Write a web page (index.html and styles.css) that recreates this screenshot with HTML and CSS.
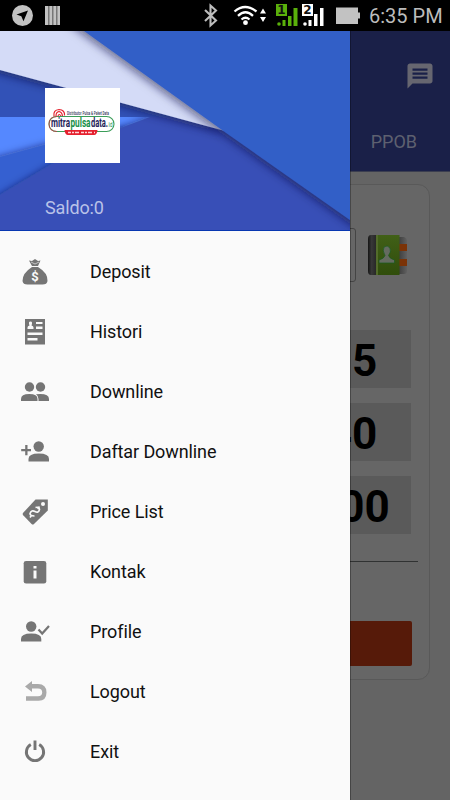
FILE: index.html
```html
<!DOCTYPE html>
<html lang="id">
<head>
<meta charset="utf-8">
<title>Mitra Pulsa Data</title>
<link rel="stylesheet" href="styles.css">
</head>
<body>
<div class="status">
  <svg class="status-left" width="80" height="31" viewBox="0 0 80 31">
    <circle cx="22.500" cy="15.500" r="10.500" fill="#c2c2c2"/>
    <path d="M28 10.500 16.500 14.500l4.800 1.800 2.200 5z" fill="#000"/>
    <path d="M45 6h15v19H45z" fill="#777"/>
    <path d="M45 6h3v19h-3zM49.500 6h2.500v19h-2.500zM53.500 6h2.500v19h-2.500zM57.500 6h2.500v19h-2.500z" fill="#c2c2c2"/>
  </svg>
  <svg class="status-right" width="165" height="31" viewBox="0 0 165 31">
    <path d="m5 10 11 10.500-5.500 5V5.500l5.500 5L5 21" fill="none" stroke="#bdbdbd" stroke-width="2.100"/>
    <g fill="none" stroke="#fff" stroke-width="2.300">
      <path d="M34.500 11.500q10.500-9 22 0M38 15.800q7.500-7 15 0M41.500 19.500q4-3.500 8 0"/>
    </g>
    <circle cx="45.500" cy="22.700" r="2.400" fill="#fff"/>
    <path d="m60 13.500 3-5 3 5zM60 17l3 5 3-5z" fill="#fff"/>
    <g fill="#5ab00b"><path d="M76 4h11v12H76z"/><circle cx="79" cy="24" r="1.800"/><path d="M82.500 20h3v6h-3zM88 16h3.500v10H88zM93.500 8H97.500v18h-4z"/></g>
    <g fill="#fff"><path d="M102 4h11v12h-11z"/><circle cx="105" cy="24" r="1.800"/><path d="M108.500 20h3v6h-3zM114 14h3.500v12H114zM120 8h3.500v18H120z"/></g>
    <text class="sim" x="81.500" y="14">1</text><text class="sim" x="107.500" y="14">2</text>
    <path d="M136 7.500h22v5h2v6h-2V24h-22z" fill="#c2c2c2"/>
  </svg>
  <span class="clock">6:35 PM</span>
</div>
<div class="screen">
  <main class="page">
    <header class="appbar">
      <svg class="chat" width="30" height="30" viewBox="0 0 24 24"><path fill="#666670" d="M20 2H4c-1.100 0-2 .9-2 2v18l4-4h14c1.100 0 2-.9 2-2V4c0-1.100-.9-2-2-2zM6 6h12v1.800H6zm0 3.200h12V11H6zm0 3.200h12v1.800H6z"/></svg>
      <span class="tab">PPOB</span>
    </header>
    <section class="card">
      <div class="entry">
        <div class="input"></div>
        <svg width="42" height="42" viewBox="0 0 42 42">
          <defs>
            <linearGradient id="spine"><stop offset="0" stop-color="#151515"/><stop offset=".4" stop-color="#383838"/><stop offset="1" stop-color="#242424"/></linearGradient>
            <linearGradient id="cover" x2="0" y2="1"><stop offset="0" stop-color="#416017"/><stop offset="1" stop-color="#304d0b"/></linearGradient>
            <linearGradient id="pages"><stop offset="0" stop-color="#3f3f3f"/><stop offset="1" stop-color="#606060"/></linearGradient>
          </defs>
          <path d="M32 3h5q3 1 3 4v30q0 3-3 3h-5z" fill="url(#pages)"/>
          <path d="M32 10h8v7h-8zM32 25h8v7h-8z" fill="#7b3307"/>
          <path d="M4 1h6v40H4q-3 0-3-4V5q0-4 3-4z" fill="url(#spine)"/>
          <path d="M9 1h23.500v40H9z" fill="url(#cover)"/>
          <path d="M9 1h2v40H9z" fill="#536c2b"/>
          <path d="M17 13q3.500-2.500 6 1 1.500 4-1.500 7.500 1 3 6 4.500v3H12v-3q5-1.500 6-4.500-3-5-1-8.500z" fill="#656b60" stroke="#195b20" stroke-width=".7"/>
        </svg>
      </div>
      <div class="amounts">
        <div class="amount">15</div>
        <div class="amount">40</div>
        <div class="amount">100</div>
      </div>
      <div class="rule"></div>
      <div class="buy"></div>
    </section>
  </main>
  <aside class="drawer">
    <div class="hero">
      <svg class="art" width="350" height="200" viewBox="0 0 350 200">
        <defs>
          <filter id="sh" x="-20%" y="-20%" width="140%" height="150%"><feDropShadow dx="-1" dy="3" stdDeviation="5" flood-color="#0a1240" flood-opacity=".6"/></filter>
          <filter id="up" x="-20%" y="-20%" width="140%" height="140%"><feDropShadow dx="0" dy="-1" stdDeviation="3.500" flood-color="#0a1750" flood-opacity=".5"/></filter>
        </defs>
        <path d="M0 0h350v200H0z" fill="#3252b7"/>
        <path d="M0 86h160v60H0z" fill="#5588ff"/>
        <path d="M-20 131.500 0 126 44 114 100 101 120 98 150 104H190v111H-20z" fill="#3660d1" filter="url(#up)"/>
        <path d="M-20 175 0 164 54 132Q100 103 150 86L240 70l140 140v20H-20z" fill="#3850b7" filter="url(#up)"/>
        <path d="M0 0h350v86H0z" fill="#3252b7"/>
        <path d="M-20-20H80L225 100 0 39-20 33z" fill="#d4dbf7" filter="url(#sh)"/>
        <path d="M57-20H380V210L350 189 222 99 84 0z" fill="#335ec7" filter="url(#sh)"/>
        <path d="M0 199h350v1H0z" fill="#0837b1"/>
      </svg>
      <svg class="logo" width="75" height="75" viewBox="0 0 75 75">
        <path d="M0 0h75v75H0z" fill="#fff"/>
        <g fill="none" stroke="#e32632" stroke-width="1.200"><path d="M9 28q-1-6 5-6.500 6 .5 5.500 6M11 28q0-4 3-4.500 3 .5 3.500 4.500M13 28q1-3 3 0"/></g>
        <rect x="4" y="28.500" width="65" height="15" rx="7.500" fill="#fff" stroke="#3b9d59" stroke-width="1.100"/>
        <path d="M12 28.500Q4 28.500 4 36t8 7.500" fill="none" stroke="#c53543" stroke-width=".8"/>
        <text class="tiny" x="22" y="26.500" textLength="42" lengthAdjust="spacingAndGlyphs">Distributor Pulsa &amp; Paket Data</text>
        <text class="brand" x="6" y="38.800" textLength="19" lengthAdjust="spacingAndGlyphs">mitra</text>
        <text class="brand green" x="25.500" y="38.800" textLength="20" lengthAdjust="spacingAndGlyphs">pulsa</text>
        <text class="brand" x="46" y="38.800" textLength="17" lengthAdjust="spacingAndGlyphs">data.</text>
        <text class="tld" x="63.500" y="38.800" textLength="4" lengthAdjust="spacingAndGlyphs">id</text>
        <path d="M19.500 42h33q-.5 5-3.500 5H23q-3 0-3.500-5z" fill="#e5202e"/>
        <path d="M23 44.500h27" stroke="#ffd4d7" stroke-width="1.300" stroke-dasharray="3 1 2 1 4 2"/>
      </svg>
      <div class="saldo">Saldo:0</div>
    </div>
    <nav class="menu">
      <a class="item"><svg viewBox="0 0 30 30"><path d="M9 3.500 12 4l3-2 3 2 2.500-.5L18 9h-6zM12 10h6q10 6 9.500 14-.5 3.500-5 3.500h-15q-4.500 0-5-3.500Q2.500 16 12 10z"/><path d="m11 5 4 2 4-2" fill="none" stroke="#fafafa" stroke-width=".6"/><text class="dollar" x="15" y="23.500">$</text></svg><span>Deposit</span></a>
      <a class="item"><svg viewBox="0 0 30 30"><path d="M5 2h20v25.500H5z"/><path fill="#fafafa" d="M7.500 12v-1.500q0-1.500 2-2Q8 4.500 10.500 4.500T11.500 8.500q2 .5 2 2V12zM16 5h6.500v2H16zM16 9.500h6.500v2.500H16zM7.500 15.500h15v2.500h-15zM7.500 21h10v2.500h-10z"/></svg><span>Histori</span></a>
      <a class="item"><svg viewBox="0 0 30 30"><circle cx="9.500" cy="10" r="4.700"/><circle cx="20.500" cy="10" r="4.700"/><path d="M1 24v-2q0-5 8.300-5t8.200 5v2zM18.500 24v-2q0-3-2.500-4.700 13-1.300 13 4.700v2z"/></svg><span>Downline</span></a>
      <a class="item"><svg viewBox="0 0 30 30"><circle cx="18.700" cy="9.500" r="5.200"/><path d="M8.500 24.500V22q0-5.500 10.300-5.500T29 22v2.500zM5.200 8h2.300v4H11v2.200H7.500v4H5.200v-4h-4V12h4z"/></svg><span>Daftar Downline</span></a>
      <a class="item"><svg viewBox="0 0 30 30"><path d="M15.500 2.500H27.800v11L14 27q-1.200 1-2.400 0l-8.400-8.700q-1-1.300 0-2.500z"/><circle cx="23" cy="7" r="2" fill="#fafafa"/><path d="M15.500 10.500q4-1 4 2-1 4-4.500 2t-5 2q0 2.500 4.500 2.500M10 20.500l1.500-2M17.500 12l2-2.500" fill="none" stroke="#fafafa" stroke-width="1.600"/></svg><span>Price List</span></a>
      <a class="item"><svg viewBox="0 0 30 30"><rect x="3.700" y="4" width="22.600" height="22.500" rx="2.300"/><path fill="#fafafa" d="M13.500 9h3v2.500h-3zM13.500 13.500h3v8h-3z"/></svg><span>Kontak</span></a>
      <a class="item"><svg viewBox="0 0 30 30"><circle cx="11.200" cy="9.500" r="5.200"/><path d="M1 24.500V22q0-5.500 10.200-5.500T21.300 22v2.500z"/><path d="m18.500 12.500 3.700 4L29 9" fill="none" stroke="#757575" stroke-width="2.200"/></svg><span>Profile</span></a>
      <a class="item"><svg viewBox="0 0 30 30"><path fill="#a9a9a9" d="m5 9.500 7-5.500v3h6q8.500 0 8.500 8.500T18 23.700H6v-4.400h12q4.200 0 4.200-4 0-3.800-4.200-3.800h-6V15z"/></svg><span>Logout</span></a>
      <a class="item"><svg viewBox="0 0 30 30"><path d="M10.800 7.500a8.600 8.600 0 1 0 8.400 0M15 3.500v9.500" fill="none" stroke="#757575" stroke-width="2.900"/></svg><span>Exit</span></a>
    </nav>
  </aside>
</div>
</body>
</html>
```
FILE: styles.css
```css
* { box-sizing: border-box; }
body { margin: 0; width: 450px; height: 800px; overflow: hidden; background: #000; font-family: Roboto, sans-serif; }
.status { display: flex; height: 31px; align-items: center; background: #000; }
.status svg { flex: none; }
.status-right { margin-left: 120px; }
.clock { margin-left: 4px; padding-top: 1px; font-size: 20px; line-height: 30px; color: #bcbcbc; white-space: nowrap; }
.sim { font: 700 12px "DejaVu Sans", sans-serif; text-anchor: middle; fill: #111; }

.screen { position: relative; height: 769px; background: #646464; }
.appbar { display: flex; flex-direction: column; align-items: flex-end; height: 141px; padding: 30px 15px 0 0; background: #1a2048; border-bottom: 1px solid #3b3e50; }
.tab { margin: 39px 18px 0 0; font-size: 18px; line-height: 24px; color: #5e6070; }
.card { width: 420px; height: 496px; margin: 12px 0 0 10px; padding: 43px 11px 0; border: 1px solid #595959; border-radius: 12px; background: #666; }
.entry { display: flex; align-items: center; justify-content: space-between; height: 54px; padding-right: 9px; }
.input { width: 334px; height: 54px; border: 1px solid #444; border-radius: 3px; }
.amounts { display: flex; flex-direction: column; align-items: flex-end; gap: 15px; margin: 48px 7px 0 0; }
.amount { width: 118px; height: 58px; background: #5a5a5a; color: #000; font-size: 44px; font-weight: 700; line-height: 62px; text-align: center; }
.rule { height: 1px; margin-top: 27px; background: #303232; }
.buy { height: 45px; margin: 59px 6px 0 0; border-radius: 2px; background: #561a09; }

.drawer { position: absolute; left: 0; top: 0; width: 350px; height: 769px; background: #fafafa; }
.drawer::after { content: ""; position: absolute; left: 350px; top: 0; width: 1px; height: 769px; background: rgba(0, 0, 0, .3); }
.hero { position: relative; height: 200px; padding: 57px 0 0 45px; overflow: hidden; }
.art { position: absolute; left: 0; top: 0; }
.logo { position: relative; display: block; }
.tiny { font-size: 4.500px; font-weight: 500; fill: #33335a; }
.brand { font-size: 12px; font-weight: 700; fill: #1d2358; }
.green { fill: #159047; }
.tld { font-size: 7px; fill: #159047; }
.saldo { position: relative; margin-top: 33px; font-size: 18px; line-height: 24px; color: #b9c2e8; letter-spacing: -.15px; }
.menu { display: flex; flex-direction: column; padding-top: 11px; }
.item { display: flex; align-items: center; gap: 40px; height: 60px; padding-left: 20px; color: #111; font-size: 18px; letter-spacing: -.1px; }
.item span { padding-bottom: 2px; }
.item svg { width: 30px; height: 30px; fill: #757575; }
.dollar { font-size: 13px; font-weight: 700; text-anchor: middle; fill: #fafafa; }
```
